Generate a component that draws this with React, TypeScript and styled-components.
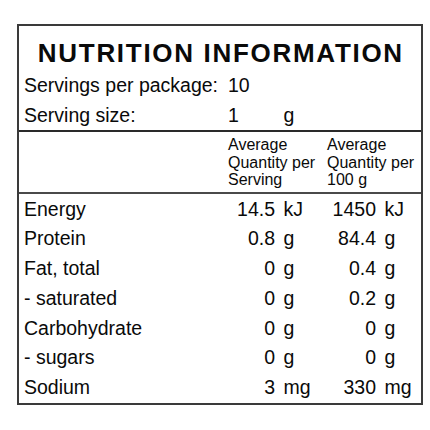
import styled, { createGlobalStyle } from "styled-components"

const GlobalStyle = createGlobalStyle`
    html, body {
        margin: 0;
        padding: 0;
        background: #ffffff;
    }
    body {
        font-family: 'Liberation Sans', Arial, sans-serif;
        color: #0a0a0a;
    }
`

const Page = styled.div`
    width: 430px;
    height: 430px;
    padding: 24px 0 0 17px;
    box-sizing: border-box;
`

const Panel = styled.div`
    width: 406px;
    box-sizing: border-box;
    border: 2px solid #3a3a3a;
    background: #fff;
`

const Title = styled.h1`
    margin: 0;
    padding: 12px 0 1.8px 1.7px;
    height: 43.8px;
    box-sizing: border-box;
    font-size: 26px;
    line-height: 30px;
    font-weight: bold;
    letter-spacing: 1.7px;
    text-align: center;
    color: #0a0a0a;
`

const Row = styled.div<{ $height?: number }>`
    display: grid;
    grid-template-columns: 204px 47px 52px 49px 1fr;
    height: ${p => p.$height ?? 30}px;
    line-height: ${p => p.$height ?? 30}px;
    font-size: 19.5px;
    padding-left: 5px;
`

const Label = styled.div`
    white-space: nowrap;
`

const Num = styled.div<{ $left?: boolean }>`
    text-align: ${p => (p.$left ? "left" : "right")};
    white-space: nowrap;
`

const Unit = styled.div`
    padding-left: 8.5px;
    white-space: nowrap;
`

const Rule = styled.div<{ $color?: string }>`
    height: 2px;
    background: ${p => p.$color ?? "#2a2a2a"};
`

const HeadRow = styled.div`
    display: grid;
    grid-template-columns: 204px 99px 1fr;
    padding: 4.7px 0 2.8px 5px;
    font-size: 16px;
    line-height: 17.5px;
`

const HeadCell = styled.div`
    white-space: pre-line;
`

const Body = styled.div`
    padding-top: 1px;
`

interface Nutrient {
    name: string
    serving: string
    servingUnit: string
    per100: string
    per100Unit: string
}

const nutrients: Nutrient[] = [
    { name: "Energy", serving: "14.5", servingUnit: "kJ", per100: "1450", per100Unit: "kJ" },
    { name: "Protein", serving: "0.8", servingUnit: "g", per100: "84.4", per100Unit: "g" },
    { name: "Fat, total", serving: "0", servingUnit: "g", per100: "0.4", per100Unit: "g" },
    { name: "- saturated", serving: "0", servingUnit: "g", per100: "0.2", per100Unit: "g" },
    { name: "Carbohydrate", serving: "0", servingUnit: "g", per100: "0", per100Unit: "g" },
    { name: "- sugars", serving: "0", servingUnit: "g", per100: "0", per100Unit: "g" },
    { name: "Sodium", serving: "3", servingUnit: "mg", per100: "330", per100Unit: "mg" },
]

export default function App() {
    return (
        <Page>
            <GlobalStyle />
            <Panel>
                <Title>NUTRITION INFORMATION</Title>
                <Row>
                    <Label>Servings per package:</Label>
                    <Num $left>10</Num>
                </Row>
                <Row>
                    <Label>Serving size:</Label>
                    <Num $left>1</Num>
                    <Unit>g</Unit>
                </Row>
                <Rule />
                <HeadRow>
                    <div />
                    <HeadCell>{"Average\nQuantity per\nServing"}</HeadCell>
                    <HeadCell>{"Average\nQuantity per\n100 g"}</HeadCell>
                </HeadRow>
                <Rule $color="#4a4a4a" />
                <Body>
                    {nutrients.map(n => (
                        <Row key={n.name} $height={29.7}>
                            <Label>{n.name}</Label>
                            <Num>{n.serving}</Num>
                            <Unit>{n.servingUnit}</Unit>
                            <Num>{n.per100}</Num>
                            <Unit>{n.per100Unit}</Unit>
                        </Row>
                    ))}
                </Body>
            </Panel>
        </Page>
    )
}
